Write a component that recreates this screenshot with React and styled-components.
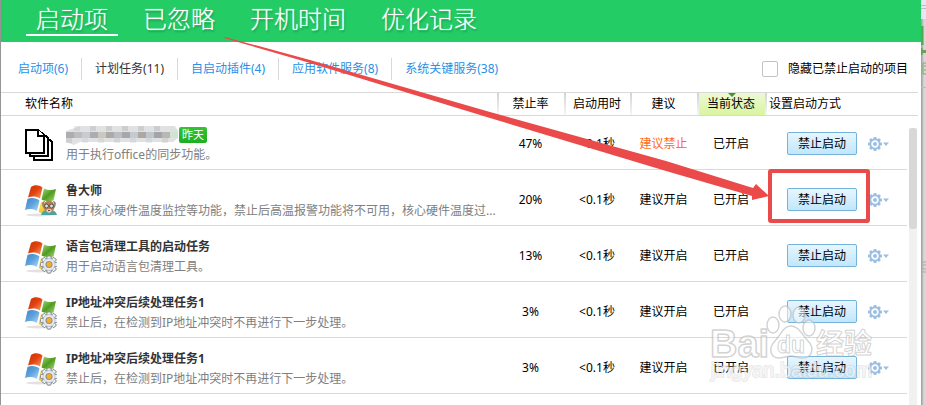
import React, { useState } from "react";
import styled, { createGlobalStyle } from "styled-components";

const GlobalStyle = createGlobalStyle`
  * {
    box-sizing: border-box;
  }
  body {
    margin: 0;
    background-color: #d8d8d8;
    color: #000;
    font-family: "Noto Sans", "Noto Sans CJK SC", sans-serif;
    font-size: 12px;
    line-height: 20px;
  }
  button, input {
    font: inherit;
  }
`;

const Page = styled.div`
  position: relative;
  display: flex;
  min-height: 100vh;
  overflow: hidden;
  background-color: #959595;
  padding-left: 1px;
`;

const Window = styled.main`
  flex: 1;
  min-width: 0;
  background-color: white;
`;

const Edge = styled.svg`
  flex: none;
  width: 5px;
  height: 405px;
`;

const Backdrop = styled.div`
  flex: none;
  width: 5px;
  background: linear-gradient(to right, #9a9a9a, #d8d8d8 3px);
`;

const Header = styled.header`
  height: 42px;
  padding-left: 25px;
  background-color: #24cc66;
`;

const Nav = styled.nav`
  display: flex;
  gap: 15px;
`;

const NavLink = styled.a`
  height: 36px;
  padding: 0 10px;
  border-bottom: 2px solid ${props => (props.$active ? "white" : "transparent")};
  color: white;
  font-family: "Noto Sans CJK SC", sans-serif;
  font-size: 24px;
  font-weight: 300;
  line-height: 36px;
  text-decoration: none;
  text-shadow: 0 0 1px rgba(255, 255, 255, 0.6), 1px 2px 2px rgba(0, 80, 30, 0.35);
`;

const SubBar = styled.div`
  display: flex;
  align-items: center;
  justify-content: space-between;
  height: 50px;
  padding: 4px 13px 0 4px;
`;

const Tabs = styled.div`
  display: flex;
`;

const Tab = styled.button`
  height: 22px;
  padding: 0 13px;
  border: none;
  border-right: 1px solid #d9d9d9;
  background: none;
  color: ${props => (props.$active ? "#333" : "#2a8fe6")};
  white-space: nowrap;
  cursor: pointer;

  &:last-child {
    border-right: none;
  }
`;

const HideLabel = styled.label`
  display: flex;
  align-items: center;
  gap: 10px;
`;

const Checkbox = styled.input`
  appearance: none;
  width: 16px;
  height: 16px;
  margin: 0;
  border: 1px solid #c3c3c3;
  border-radius: 2px;
  background-color: ${props => (props.checked ? "#24cc66" : "white")};
`;

const List = styled.div`
  display: flex;
`;

const Table = styled.table`
  flex: 1;
  min-width: 0;
  table-layout: fixed;
  border-spacing: 0;
  align-self: flex-start;
`;

const Col = styled.col`
  width: ${props => props.$width};
`;

const Th = styled.th`
  position: relative;
  height: 24px;
  padding: 0 0 0 ${props => props.$indent || "0"};
  border-top: 1px solid #d9d9d9;
  border-bottom: 1px solid #d9d9d9;
  font-weight: normal;
  text-align: ${props => props.$align || "center"};
  background: ${props =>
    props.$plain
      ? "none"
      : "linear-gradient(#d3d3d3, #f6f6f6) left / 2px 100% no-repeat"}
    ${props => (props.$sorted ? ", linear-gradient(#edf9d5, #d9f59f)" : "")};

  &::after {
    content: "";
    display: ${props => (props.$sorted ? "block" : "none")};
    position: absolute;
    top: 0;
    left: 50%;
    margin-left: -3px;
    border: 4px solid transparent;
    border-top-color: #43962a;
    border-bottom: none;
  }
`;

const Row = styled.tr`
  height: 56px;

  &:first-child {
    height: 54px;
  }
`;

const Td = styled.td`
  padding: 0 0 ${props => props.$bottom || "15px"} ${props => props.$indent || "0"};
  border-bottom: 1px solid #d9d9d9;
  vertical-align: bottom;
  text-align: ${props => props.$align || "center"};
  color: ${props => (props.$warn ? "#ff6a13" : "#000")};
`;

const Item = styled.div`
  display: flex;
  align-items: center;
  gap: 9px;
  text-align: left;
`;

const ItemIcon = styled.svg`
  flex: none;
  width: 32px;
  height: 34px;
`;

const ItemText = styled.div`
  min-width: 0;
`;

const Name = styled.div`
  display: flex;
  align-items: center;
  color: #333;
  font-weight: bold;
  white-space: nowrap;
`;

const Desc = styled.div`
  overflow: hidden;
  color: #808080;
  white-space: nowrap;
`;

const Mosaic = styled.svg`
  width: 112px;
  height: 20px;
`;

const Badge = styled.span`
  height: 16px;
  margin-left: 1px;
  padding: 0 3px;
  border-radius: 2px;
  background: linear-gradient(#35c235, #21ad21);
  color: white;
  font-size: 11px;
  font-weight: normal;
  line-height: 16px;
`;

const Actions = styled.div`
  display: flex;
  align-items: center;
  gap: 11px;
`;

const StopButton = styled.button`
  width: 70px;
  height: 23px;
  padding: 0;
  border: 1px solid #74b4dc;
  border-radius: 2px;
  background: linear-gradient(#e6f6ff, #c2e6fc);
  line-height: 20px;
  cursor: pointer;
`;

const GearButton = styled.button`
  display: flex;
  padding: 0;
  border: none;
  background: none;
  cursor: pointer;
`;

const Rail = styled.div`
  display: flex;
  flex-direction: column;
  flex: none;
  width: 11px;
  margin-right: 3px;
`;

const RailCap = styled.div`
  height: 24px;
  border-top: 1px solid #d9d9d9;
  border-bottom: 1px solid #d9d9d9;
`;

const Track = styled.div`
  flex: 1;
  width: 8px;
  min-height: 277px;
  margin: 12px 0 0 2px;
  background-color: #f1f1f1;
`;

const Thumb = styled.div`
  height: 101px;
  border-radius: 3px;
  background-color: #d8d8d8;
`;

const Overlay = styled.svg`
  position: absolute;
  top: 0;
  left: 0;
  width: 926px;
  height: 405px;
  pointer-events: none;
`;

const navItems = ["启动项", "已忽略", "开机时间", "优化记录"];

const tabItems = [
  "启动项(6)",
  "计划任务(11)",
  "自启动插件(4)",
  "应用软件服务(8)",
  "系统关键服务(38)",
];

const tasks = [
  { icon: "docs", badge: "昨天", desc: "用于执行office的同步功能。", rate: "47%", advice: "建议禁止", warn: true },
  { icon: "master", name: "鲁大师", desc: "用于核心硬件温度监控等功能，禁止后高温报警功能将不可用，核心硬件温度过...", rate: "20%", advice: "建议开启" },
  { icon: "gear", name: "语言包清理工具的启动任务", desc: "用于启动语言包清理工具。", rate: "13%", advice: "建议开启" },
  { icon: "gear", name: "IP地址冲突后续处理任务1", desc: "禁止后，在检测到IP地址冲突时不再进行下一步处理。", rate: "3%", advice: "建议开启" },
  { icon: "gear", name: "IP地址冲突后续处理任务1", desc: "禁止后，在检测到IP地址冲突时不再进行下一步处理。", rate: "3%", advice: "建议开启" },
];

const mosaicColors = [
  "#a9a6a6", "#b9b9bb", "#c6c9cc", "#a5a7ab", "#c9c4bd", "#a7a39f", "#b4babd",
  "#9fa1a6", "#c3c6ca", "#a8a19c", "#bec3c6", "#9b9da1", "#b5b2af", "#cfe3cf",
];

const angles = [0, 45, 90, 135, 180, 225, 270, 315];

const DocsIcon = () => (
  <ItemIcon viewBox="0 0 32 34" fill="white" stroke="black" strokeWidth="2" shapeRendering="crispEdges">
    <path d="M9 9H21L27 14V32H9Z" />
    <path d="M5 5H17L23 10V28H5Z" />
    <path d="M1 2H13L19 8V25H1Z" />
    <path d="M13 2V8H19" />
  </ItemIcon>
);

const WindowsIcon = ({ type }) => (
  <ItemIcon viewBox="0 0 32 34">
    <defs>
      <linearGradient id="flagRed" x2="1" y2="1">
        <stop offset="0" stopColor="#c93208" />
        <stop offset="0.5" stopColor="#e2420f" />
        <stop offset="1" stopColor="#f9a266" />
      </linearGradient>
      <linearGradient id="flagGreen" x2="1" y2="1">
        <stop offset="0" stopColor="#a8d678" />
        <stop offset="0.5" stopColor="#4f9c22" />
        <stop offset="1" stopColor="#a9d96a" />
      </linearGradient>
      <linearGradient id="flagBlue" x2="1" y2="1">
        <stop offset="0" stopColor="#3c83c9" />
        <stop offset="0.5" stopColor="#5fa3dc" />
        <stop offset="1" stopColor="#b5dcf5" />
      </linearGradient>
      <linearGradient id="flagYellow" x2="1" y2="1">
        <stop offset="0" stopColor="#ffe45c" />
        <stop offset="1" stopColor="#f0a80e" />
      </linearGradient>
    </defs>
    <ellipse cx="14" cy="31" rx="13" ry="1.5" fill="#e2e2e2" />
    <path d="M6 3C9 0.500 14 0.500 17.500 3.500L15 14.500C11 12 7 12 3 13.500Z" fill="url(#flagRed)" />
    <path d="M19 4.500C23 6.500 27 6.500 31 5L28.500 16.500C25 17.500 20.500 17.500 16.500 15.500Z" fill="url(#flagGreen)" />
    <path d="M2.500 15C6 13.500 10 13.500 14.500 16.500L12 27C8 24.500 4 24.500 0 26Z" fill="url(#flagBlue)" />
    <path d="M16 17.500C20 19.500 24 19.500 28 18L25 29C21 30 17 29.500 13.500 28Z" fill="url(#flagYellow)" />
    {type === "gear" ? (
      <g>
        {angles.map((a) => (
          <rect key={a} x="22" y="16" width="4" height="17" rx="1" fill="#eef1f4" stroke="#7b838b" strokeWidth="0.8" transform={`rotate(${a} 24 24.5)`} />
        ))}
        <circle cx="24" cy="24.5" r="6" fill="#e7ebef" stroke="#a2a9b0" strokeWidth="0.6" />
        <circle cx="24" cy="24.5" r="3.6" fill="#8f969e" />
        <circle cx="24" cy="24.5" r="2.4" fill="#ffac1c" />
      </g>
    ) : (
      <g>
        <path d="M16 31C17 27 20 26 24 26S31 27 32 31Z" fill="#46a6a0" />
        <ellipse cx="24" cy="22.500" rx="5.5" ry="6" fill="#b97f58" />
        <path d="M18 23C16 19 18 17 20 17C18 20 19 22 19 24ZM30 23C32 19 30 17 28 17C30 20 29 22 29 24Z" fill="#7f7a76" />
        <circle cx="21.5" cy="22" r="2" fill="#cfe0dd" stroke="#54453c" strokeWidth="0.9" />
        <circle cx="26.5" cy="22" r="2" fill="#cfe0dd" stroke="#54453c" strokeWidth="0.9" />
        <path d="M21 26C22 24.500 26 24.500 27 26L26 28L24 29L22 28Z" fill="#d9cfc5" />
        <path d="M23 26.500H25" stroke="#8b3e2e" />
      </g>
    )}
  </ItemIcon>
);

const GearIcon = () => (
  <svg width="22" height="14" viewBox="0 0 22 14">
    <g fill="#9bbfe3">
      {angles.map((a) => (
        <rect key={a} x="5.600" y="0" width="2.800" height="3" transform={`rotate(${a} 7 7)`} />
      ))}
      <circle cx="7" cy="7" r="2" />
      <path d="M15 5.500H21L18 9Z" />
    </g>
    <circle cx="7" cy="7" r="4.700" fill="none" stroke="#9bbfe3" strokeWidth="2" />
  </svg>
);

const BlurredName = () => (
  <Mosaic viewBox="0 0 112 20">
    <path d="M0 6L14 1H108L112 5V13L107 17H14L8 20L0 17Z" fill="#dfe1e3" />
    {mosaicColors.map((color, i) => (
      <g key={i} fill={color}>
        <rect x={i * 8} y="7" width="8" height="6" opacity="0.9" />
        <rect x={i * 8} y={i % 2 ? 1 : 13} width="6" height="5" opacity="0.3" />
      </g>
    ))}
  </Mosaic>
);

const TaskRow = ({ task }) => (
  <Row>
    <Td $align="left" $indent="24px" $bottom="4px">
      <Item>
        {task.icon === "docs" ? <DocsIcon /> : <WindowsIcon type={task.icon} />}
        <ItemText>
          <Name>
            {task.name || <BlurredName />}
            {task.badge && <Badge>{task.badge}</Badge>}
          </Name>
          <Desc>{task.desc}</Desc>
        </ItemText>
      </Item>
    </Td>
    <Td>{task.rate}</Td>
    <Td>&lt;0.1秒</Td>
    <Td $warn={task.warn}>{task.advice}</Td>
    <Td>已开启</Td>
    <Td $align="left" $indent="22px" $bottom="14px">
      <Actions>
        <StopButton>禁止启动</StopButton>
        <GearButton aria-label="设置">
          <GearIcon />
        </GearButton>
      </Actions>
    </Td>
  </Row>
);

const Annotation = () => (
  <Overlay viewBox="0 0 926 405">
    <g fill="white" fillOpacity="0.5" stroke="#b5b5b5" strokeOpacity="0.6" strokeWidth="1.500" strokeLinejoin="round" fontFamily="Liberation Sans, Noto Sans CJK SC, sans-serif">
      <text x="710" y="357" fontSize="38" fontWeight="bold">Bai</text>
      <ellipse cx="773" cy="325" rx="6" ry="8" />
      <ellipse cx="785" cy="314" rx="6" ry="8" />
      <ellipse cx="799" cy="315" rx="6" ry="8" />
      <ellipse cx="809" cy="328" rx="6" ry="8" />
      <path d="M791 326C799 326 802 335 808 341C815 348 812 358 803 358C798 358 795 356 791 356S783 358 779 358C770 358 768 348 775 341C781 335 783 326 791 326Z" />
      <text x="777" y="353" fontSize="23" fontWeight="bold" strokeWidth="1">du</text>
      <text x="816" y="354" fontSize="28" fontWeight="bold" strokeWidth="1">经验</text>
      <text x="711" y="377" fontSize="20" fillOpacity="0.6" strokeWidth="2" strokeOpacity="0.3" paintOrder="stroke">jingyan.baidu.com</text>
    </g>
    <path d="M225 37L310 60L490 112L666 161L753 188L756 184L769 196L752 200L752 196L666 171L490 118L310 63L224 38Z" fill="#eb4a4a" />
    <rect x="770" y="171" width="98" height="50" rx="1" fill="none" stroke="#eb4a4a" strokeWidth="4" />
  </Overlay>
);

const App = () => {
  const [hideStopped, setHideStopped] = useState(false);
  const [activeTab, setActiveTab] = useState(1);

  return (
    <>
      <GlobalStyle />
      <Page>
        <Window>
          <Header>
            <Nav>
              {navItems.map((item, i) => (
                <NavLink key={item} href="#" $active={i === 0}>{item}</NavLink>
              ))}
            </Nav>
          </Header>
          <SubBar>
            <Tabs>
              {tabItems.map((item, i) => (
                <Tab key={item} $active={i === activeTab} onClick={() => setActiveTab(i)}>{item}</Tab>
              ))}
            </Tabs>
            <HideLabel>
              <Checkbox
                type="checkbox"
                checked={hideStopped}
                onChange={() => setHideStopped(!hideStopped)}
              />
              隐藏已禁止启动的项目
            </HideLabel>
          </SubBar>
          <List>
            <Table>
              <colgroup>
                <Col $width="auto" />
                <Col $width="67px" />
                <Col $width="66px" />
                <Col $width="67px" />
                <Col $width="68px" />
                <Col $width="142px" />
              </colgroup>
              <thead>
                <tr>
                  <Th $align="left" $indent="24px" $plain>软件名称</Th>
                  <Th>禁止率</Th>
                  <Th>启动用时</Th>
                  <Th>建议</Th>
                  <Th $sorted>当前状态</Th>
                  <Th $align="left" $indent="4px">设置启动方式</Th>
                </tr>
              </thead>
              <tbody>
                {tasks.map((task, i) => (
                  <TaskRow key={i} task={task} />
                ))}
              </tbody>
            </Table>
            <Rail>
              <RailCap />
              <Track>
                <Thumb />
              </Track>
            </Rail>
          </List>
        </Window>
        <Backdrop>
          <Edge viewBox="0 0 5 405">
            <path d="M0 0H5V19H0Z" fill="#e4e8f2" />
            <path d="M0 5.500H5M0 8.500H5M0 87.500H5" stroke="#bcbcbc" />
            <path d="M1 26V45M0 48V55M0 51.500H5" stroke="#5ea552" strokeWidth="3" fill="none" />
            <path d="M5 63H2V74H5M3 66H5M3 70H5" stroke="#6fb562" fill="none" />
            <path d="M1 262H5M1 265H5M1 269H5M1 272H5" stroke="#a9a9a9" />
          </Edge>
        </Backdrop>
        <Annotation />
      </Page>
    </>
  );
};

export default App;
